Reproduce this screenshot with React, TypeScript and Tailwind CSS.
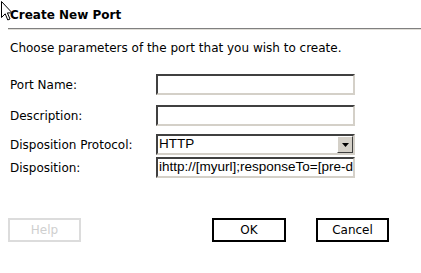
import React from 'react';

function Cursor() {
  return (
    <svg className="absolute left-0 top-0" width="14" height="22" viewBox="0 0 14 22">
      <path d="M1.5 1.5 L1.5 17.5 L5.2 13.8 L7.8 20 L10 19 L7.4 12.9 L12.2 12.9 Z" fill="#fff" stroke="#000" strokeWidth="1" />
    </svg>
  );
}

function TextBox({ value }: { value?: string }) {
  return (
    <div className="w-[199px] h-[21px] border-2 border-t-[#404040] border-l-[#404040] border-b-[#d4d0c8] border-r-[#d4d0c8] bg-white flex items-center overflow-hidden whitespace-nowrap font-['Liberation_Sans',Arial,sans-serif] text-[13.5px] text-black pl-[1px]">
      {value}
    </div>
  );
}

function Row({ label, children }: { label: string; children: React.ReactNode }) {
  return (
    <div className="flex items-center">
      <div className="w-[146px]">{label}</div>
      {children}
    </div>
  );
}

export default function App() {
  return (
    <div className="relative w-[421px] h-[273px] bg-white overflow-hidden font-['DejaVu_Sans',Verdana,sans-serif] text-[12px] text-black">
      <div className="pt-[7px] pl-[10px] font-bold text-[12px] leading-[16px]">Create New Port</div>

      {/* Separator */}
      <div className="ml-[8px] mt-[5px] border-t border-[#808080] border-b border-b-[#e0ded8]" />

      <div className="pl-[10px] mt-[10px] leading-[16px]">Choose parameters of the port that you wish to create.</div>

      <div className="pl-[10px] mt-[18px] flex flex-col">
        <Row label="Port Name:">
          <TextBox />
        </Row>
        <div className="mt-[10px]">
          <Row label="Description:">
            <TextBox />
          </Row>
        </div>
        <div className="mt-[8px]">
          <Row label="Disposition Protocol:">
            <div className="w-[199px] h-[21px] border-2 border-t-[#404040] border-l-[#404040] border-b-[#d4d0c8] border-r-[#d4d0c8] bg-white flex items-center font-['Liberation_Sans',Arial,sans-serif] text-[13.5px]">
              <span className="flex-1 pl-[1px]">HTTP</span>
              <div className="w-[16px] h-[17px] bg-[#d4d0c8] border border-t-white border-l-white border-b-[#404040] border-r-[#404040] flex items-center justify-center">
                <svg width="7" height="4" viewBox="0 0 7 4"><path d="M0 0h7L3.5 4z" fill="#000" /></svg>
              </div>
            </div>
          </Row>
        </div>
        <div className="mt-[2px]">
          <Row label="Disposition:">
            <TextBox value="ihttp://[myurl];responseTo=[pre-defined response port]" />
          </Row>
        </div>
      </div>

      <div className="flex mt-[40px] pl-[8px]">
        <div className="w-[73px] h-[24px] border-2 border-[#dcdcdc] text-[#cfcfcf] flex items-center justify-center">Help</div>
        <div className="ml-[131px] w-[74px] h-[24px] border-2 border-black flex items-center justify-center">OK</div>
        <div className="ml-[30px] w-[73px] h-[24px] border-2 border-black flex items-center justify-center">Cancel</div>
      </div>

      <Cursor />
    </div>
  );
}
